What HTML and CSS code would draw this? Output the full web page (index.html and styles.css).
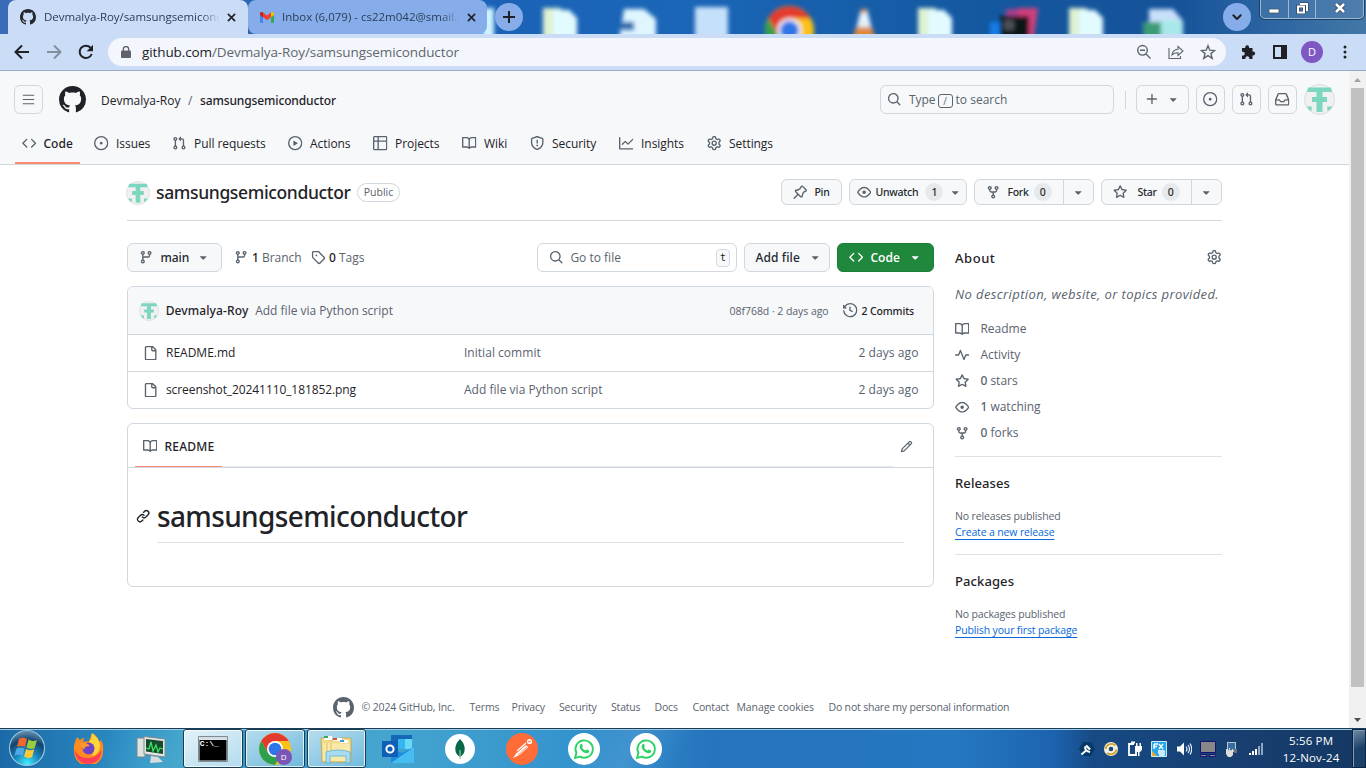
FILE: index.html
```html
<!DOCTYPE html>
<html lang="en">
<head>
<meta charset="utf-8">
<title>Devmalya-Roy/samsungsemiconductor</title>
<link rel="stylesheet" href="styles.css">
</head>
<body>
<svg class="defs" width="0" height="0" aria-hidden="true">
<symbol id="mark" viewBox="0 0 16 16"><path d="M8 0c4.42 0 8 3.58 8 8a8.013 8.013 0 0 1-5.45 7.59c-.4.08-.55-.17-.55-.38 0-.27.01-1.13.01-2.2 0-.75-.25-1.23-.54-1.48 1.78-.2 3.65-.88 3.65-3.95 0-.88-.31-1.59-.82-2.15.08-.2.36-1.02-.08-2.12 0 0-.67-.22-2.2.82-.64-.18-1.32-.27-2-.27-.68 0-1.36.09-2 .27-1.53-1.03-2.2-.82-2.2-.82-.44 1.1-.16 1.92-.08 2.12-.51.56-.82 1.28-.82 2.15 0 3.06 1.86 3.75 3.64 3.95-.23.2-.44.55-.51 1.07-.46.21-1.61.55-2.33-.66-.15-.24-.6-.83-1.23-.82-.67.01-.27.38.01.53.34.19.73.9.82 1.13.16.45.68 1.31 2.69.94 0 .67.01 1.3.01 1.49 0 .21-.15.45-.55.38A7.995 7.995 0 0 1 0 8c0-4.42 3.58-8 8-8Z"/></symbol>
<symbol id="code" viewBox="0 0 16 16"><path d="m11.28 3.22 4.25 4.25a.75.75 0 0 1 0 1.06l-4.25 4.25a.749.749 0 0 1-1.275-.326.749.749 0 0 1 .215-.734L13.94 8l-3.72-3.72a.749.749 0 0 1 .326-1.275.749.749 0 0 1 .734.215Zm-6.56 0a.751.751 0 0 1 1.042.018.751.751 0 0 1 .018 1.042L2.06 8l3.72 3.72a.749.749 0 0 1-.326 1.275.749.749 0 0 1-.734-.215L.47 8.53a.75.75 0 0 1 0-1.06Z"/></symbol>
<symbol id="issue" viewBox="0 0 16 16"><path d="M8 9.5a1.5 1.5 0 1 0 0-3 1.5 1.5 0 0 0 0 3Z"/><path d="M8 0a8 8 0 1 1 0 16A8 8 0 0 1 8 0ZM1.5 8a6.5 6.5 0 1 0 13 0 6.5 6.5 0 0 0-13 0Z"/></symbol>
<symbol id="pull" viewBox="0 0 16 16"><path d="M1.5 3.25a2.25 2.25 0 1 1 3 2.122v5.256a2.251 2.251 0 1 1-1.5 0V5.372A2.25 2.25 0 0 1 1.5 3.25Zm5.677-.177L9.573.677A.25.25 0 0 1 10 .854V2.5h1A2.5 2.5 0 0 1 13.5 5v5.628a2.251 2.251 0 1 1-1.5 0V5a1 1 0 0 0-1-1h-1v1.646a.25.25 0 0 1-.427.177L7.177 3.427a.25.25 0 0 1 0-.354ZM3.75 2.5a.75.75 0 1 0 0 1.5.75.75 0 0 0 0-1.5Zm0 9.5a.75.75 0 1 0 0 1.5.75.75 0 0 0 0-1.5Zm8.25.75a.75.75 0 1 0 1.5 0 .75.75 0 0 0-1.5 0Z"/></symbol>
<symbol id="play" viewBox="0 0 16 16"><path d="M8 0a8 8 0 1 1 0 16A8 8 0 0 1 8 0ZM1.5 8a6.5 6.5 0 1 0 13 0 6.5 6.5 0 0 0-13 0Zm4.879-2.773 4.264 2.559a.25.25 0 0 1 0 .428l-4.264 2.559A.25.25 0 0 1 6 10.559V5.442a.25.25 0 0 1 .379-.215Z"/></symbol>
<symbol id="table" viewBox="0 0 16 16"><path d="M0 1.75C0 .784.784 0 1.75 0h12.5C15.216 0 16 .784 16 1.75v12.5A1.75 1.75 0 0 1 14.25 16H1.75A1.75 1.75 0 0 1 0 14.25ZM6.5 6.5v8h7.75a.25.25 0 0 0 .25-.25V6.5Zm8-1.5V1.75a.25.25 0 0 0-.25-.25H6.5V5Zm-13 1.5v7.75c0 .138.112.25.25.25H5v-8ZM5 5V1.5H1.75a.25.25 0 0 0-.25.25V5Z"/></symbol>
<symbol id="book" viewBox="0 0 16 16"><path d="M0 1.75A.75.75 0 0 1 .75 1h4.253c1.227 0 2.317.59 3 1.501A3.743 3.743 0 0 1 11.006 1h4.245a.75.75 0 0 1 .75.75v10.5a.75.75 0 0 1-.75.75h-4.507a2.25 2.25 0 0 0-1.591.659l-.622.621a.75.75 0 0 1-1.06 0l-.622-.621A2.25 2.25 0 0 0 5.258 13H.75a.75.75 0 0 1-.75-.75Zm7.251 10.324.004-5.073-.002-2.253A2.25 2.25 0 0 0 5.003 2.5H1.5v9h3.757a3.75 3.75 0 0 1 1.994.574ZM8.755 4.75l-.004 7.322a3.752 3.752 0 0 1 1.992-.572H14.5v-9h-3.495a2.25 2.25 0 0 0-2.25 2.25Z"/></symbol>
<symbol id="shield" viewBox="0 0 16 16"><path d="M7.467.133a1.748 1.748 0 0 1 1.066 0l5.25 1.68A1.75 1.75 0 0 1 15 3.48V7c0 1.566-.32 3.182-1.303 4.682-.983 1.498-2.585 2.813-5.032 3.855a1.697 1.697 0 0 1-1.33 0c-2.447-1.042-4.049-2.357-5.032-3.855C1.32 10.182 1 8.566 1 7V3.48a1.75 1.75 0 0 1 1.217-1.667Zm.61 1.429a.25.25 0 0 0-.153 0l-5.25 1.68a.25.25 0 0 0-.174.238V7c0 1.358.275 2.666 1.057 3.86.784 1.194 2.121 2.34 4.366 3.297a.196.196 0 0 0 .154 0c2.245-.956 3.582-2.104 4.366-3.298C13.225 9.666 13.5 8.36 13.5 7V3.48a.251.251 0 0 0-.174-.237l-5.25-1.68ZM8.75 4.75v3a.75.75 0 0 1-1.5 0v-3a.75.75 0 0 1 1.5 0ZM9 10.5a1 1 0 1 1-2 0 1 1 0 0 1 2 0Z"/></symbol>
<symbol id="graph" viewBox="0 0 16 16"><path d="M1.5 1.75V13.5h13.75a.75.75 0 0 1 0 1.5H.75a.75.75 0 0 1-.75-.75V1.75a.75.75 0 0 1 1.5 0Zm14.28 2.53-5.25 5.25a.75.75 0 0 1-1.06 0L7 7.06 4.28 9.78a.751.751 0 0 1-1.042-.018.751.751 0 0 1-.018-1.042l3.25-3.25a.75.75 0 0 1 1.06 0L10 7.94l4.72-4.72a.751.751 0 0 1 1.042.018.751.751 0 0 1 .018 1.042Z"/></symbol>
<symbol id="gear" viewBox="0 0 16 16"><path d="M8 0a8.2 8.2 0 0 1 .701.031C9.444.095 9.99.645 10.16 1.29l.288 1.107c.018.066.079.158.212.224.231.114.454.243.668.386.123.082.233.09.299.071l1.103-.303c.644-.176 1.392.021 1.82.63.27.385.506.792.704 1.218.315.675.111 1.422-.364 1.891l-.814.806c-.049.048-.098.147-.088.294.016.257.016.515 0 .772-.01.147.038.246.088.294l.814.806c.475.469.679 1.216.364 1.891a7.977 7.977 0 0 1-.704 1.217c-.428.61-1.176.807-1.82.63l-1.102-.302c-.067-.019-.177-.011-.3.071a5.909 5.909 0 0 1-.668.386c-.133.066-.194.158-.211.224l-.29 1.106c-.168.646-.715 1.196-1.458 1.26a8.006 8.006 0 0 1-1.402 0c-.743-.064-1.289-.614-1.458-1.26l-.289-1.106c-.018-.066-.079-.158-.212-.224a5.738 5.738 0 0 1-.668-.386c-.123-.082-.233-.09-.299-.071l-1.103.303c-.644.176-1.392-.021-1.82-.63a8.12 8.12 0 0 1-.704-1.218c-.315-.675-.111-1.422.363-1.891l.815-.806c.05-.048.098-.147.088-.294a6.214 6.214 0 0 1 0-.772c.01-.147-.038-.246-.088-.294l-.815-.806C.635 6.045.431 5.298.746 4.623a7.92 7.92 0 0 1 .704-1.217c.428-.61 1.176-.807 1.82-.63l1.102.302c.067.019.177.011.3-.071.214-.143.437-.272.668-.386.133-.066.194-.158.211-.224l.29-1.106C6.009.645 6.556.095 7.299.03 7.53.01 7.764 0 8 0Zm-.571 1.525c-.036.003-.108.036-.137.146l-.289 1.105c-.147.561-.549.967-.998 1.189-.173.086-.34.183-.5.29-.417.278-.97.423-1.529.27l-1.103-.303c-.109-.03-.175.016-.195.045-.22.312-.412.644-.573.99-.014.031-.021.11.059.19l.815.806c.411.406.562.957.53 1.456a4.709 4.709 0 0 0 0 .582c.032.499-.119 1.05-.53 1.456l-.815.806c-.081.08-.073.159-.059.19.162.346.353.677.573.989.02.03.085.076.195.046l1.102-.303c.56-.153 1.113-.008 1.53.27.161.107.328.204.501.29.447.222.85.629.997 1.189l.289 1.105c.029.109.101.143.137.146a6.6 6.6 0 0 0 1.142 0c.036-.003.108-.036.137-.146l.289-1.105c.147-.561.549-.967.998-1.189.173-.086.34-.183.5-.29.417-.278.97-.423 1.529-.27l1.103.303c.109.029.175-.016.195-.045.22-.313.411-.644.573-.99.014-.031.021-.11-.059-.19l-.815-.806c-.411-.406-.562-.957-.53-1.456a4.709 4.709 0 0 0 0-.582c-.032-.499.119-1.05.53-1.456l.815-.806c.081-.08.073-.159.059-.19a6.464 6.464 0 0 0-.573-.989c-.02-.03-.085-.076-.195-.046l-1.102.303c-.56.153-1.113.008-1.53-.27a4.44 4.44 0 0 0-.501-.29c-.447-.222-.85-.629-.997-1.189l-.289-1.105c-.029-.11-.101-.143-.137-.146a6.6 6.6 0 0 0-1.142 0ZM11 8a3 3 0 1 1-6 0 3 3 0 0 1 6 0ZM9.5 8a1.5 1.5 0 1 0-3.001.001A1.5 1.5 0 0 0 9.5 8Z"/></symbol>
<symbol id="search" viewBox="0 0 16 16"><path d="M10.68 11.74a6 6 0 0 1-7.922-8.982 6 6 0 0 1 8.982 7.922l3.04 3.04a.749.749 0 0 1-.326 1.275.749.749 0 0 1-.734-.215ZM11.5 7a4.499 4.499 0 1 0-8.997 0A4.499 4.499 0 0 0 11.5 7Z"/></symbol>
<symbol id="branch" viewBox="0 0 16 16"><path d="M9.5 3.25a2.25 2.25 0 1 1 3 2.122V6A2.5 2.5 0 0 1 10 8.5H6a1 1 0 0 0-1 1v1.128a2.251 2.251 0 1 1-1.5 0V5.372a2.25 2.25 0 1 1 1.5 0v1.836A2.493 2.493 0 0 1 6 7h4a1 1 0 0 0 1-1v-.628A2.25 2.25 0 0 1 9.5 3.25Zm-6 0a.75.75 0 1 0 1.5 0 .75.75 0 0 0-1.5 0Zm8.25-.75a.75.75 0 1 0 0 1.5.75.75 0 0 0 0-1.5ZM4.25 12a.75.75 0 1 0 0 1.5.75.75 0 0 0 0-1.5Z"/></symbol>
<symbol id="fork" viewBox="0 0 16 16"><path d="M5 5.372v.878c0 .414.336.75.75.75h4.5a.75.75 0 0 0 .75-.75v-.878a2.25 2.25 0 1 1 1.5 0v.878a2.25 2.25 0 0 1-2.25 2.25h-1.5v2.128a2.251 2.251 0 1 1-1.5 0V8.5h-1.5A2.25 2.25 0 0 1 3.5 6.25v-.878a2.25 2.25 0 1 1 1.5 0ZM5 3.25a.75.75 0 1 0-1.5 0 .75.75 0 0 0 1.5 0Zm6.75.75a.75.75 0 1 0 0-1.5.75.75 0 0 0 0 1.5Zm-3 8.75a.75.75 0 1 0-1.5 0 .75.75 0 0 0 1.5 0Z"/></symbol>
<symbol id="star" viewBox="0 0 16 16"><path d="M8 .25a.75.75 0 0 1 .673.418l1.882 3.815 4.21.612a.75.75 0 0 1 .416 1.279l-3.046 2.97.719 4.192a.751.751 0 0 1-1.088.791L8 12.347l-3.766 1.98a.75.75 0 0 1-1.088-.79l.72-4.194L.818 6.374a.75.75 0 0 1 .416-1.28l4.21-.611L7.327.668A.75.75 0 0 1 8 .25Zm0 2.445L6.615 5.5a.75.75 0 0 1-.564.41l-3.097.45 2.24 2.184a.75.75 0 0 1 .216.664l-.528 3.084 2.769-1.456a.75.75 0 0 1 .698 0l2.77 1.456-.53-3.084a.75.75 0 0 1 .216-.664l2.24-2.183-3.096-.45a.75.75 0 0 1-.564-.41L8 2.694Z"/></symbol>
<symbol id="eye" viewBox="0 0 16 16"><path d="M8 2c1.981 0 3.671.992 4.933 2.078 1.27 1.091 2.187 2.345 2.637 3.023a1.62 1.62 0 0 1 0 1.798c-.45.678-1.367 1.932-2.637 3.023C11.67 13.008 9.981 14 8 14c-1.981 0-3.671-.992-4.933-2.078C1.797 10.83.88 9.576.43 8.898a1.62 1.62 0 0 1 0-1.798c.45-.677 1.367-1.931 2.637-3.022C4.33 2.992 6.019 2 8 2ZM1.679 7.932a.12.12 0 0 0 0 .136c.411.622 1.241 1.75 2.366 2.717C5.176 11.758 6.527 12.5 8 12.5c1.473 0 2.825-.742 3.955-1.715 1.124-.967 1.954-2.096 2.366-2.717a.12.12 0 0 0 0-.136c-.412-.621-1.242-1.75-2.366-2.717C10.824 4.242 9.473 3.5 8 3.5c-1.473 0-2.825.742-3.955 1.715-1.124.967-1.954 2.096-2.366 2.717ZM8 10a2 2 0 1 1-.001-3.999A2 2 0 0 1 8 10Z"/></symbol>
<symbol id="history" viewBox="0 0 16 16"><path d="m.427 1.927 1.215 1.215a8.002 8.002 0 1 1-1.6 5.685.75.75 0 1 1 1.493-.154 6.5 6.5 0 1 0 1.18-4.458l1.358 1.358A.25.25 0 0 1 3.896 6H.25A.25.25 0 0 1 0 5.75V2.104a.25.25 0 0 1 .427-.177ZM7.75 4a.75.75 0 0 1 .75.75v2.992l2.028.812a.75.75 0 0 1-.557 1.392l-2.5-1A.751.751 0 0 1 7 8.25v-3.5A.75.75 0 0 1 7.75 4Z"/></symbol>
<symbol id="file" viewBox="0 0 16 16"><path d="M2 1.75C2 .784 2.784 0 3.75 0h6.586c.464 0 .909.184 1.237.513l2.914 2.914c.329.328.513.773.513 1.237v9.586A1.75 1.75 0 0 1 13.25 16h-9.5A1.75 1.75 0 0 1 2 14.25Zm1.75-.25a.25.25 0 0 0-.25.25v12.5c0 .138.112.25.25.25h9.5a.25.25 0 0 0 .25-.25V6h-2.75A1.75 1.75 0 0 1 9 4.25V1.5Zm6.75.062V4.25c0 .138.112.25.25.25h2.688l-.011-.013-2.914-2.914-.013-.011Z"/></symbol>
<symbol id="tag" viewBox="0 0 16 16"><path d="M1 7.775V2.75C1 1.784 1.784 1 2.75 1h5.025c.464 0 .91.184 1.238.513l6.25 6.25a1.75 1.75 0 0 1 0 2.474l-5.026 5.026a1.75 1.75 0 0 1-2.474 0l-6.25-6.25A1.752 1.752 0 0 1 1 7.775Zm1.5 0c0 .066.026.13.073.177l6.25 6.25a.25.25 0 0 0 .354 0l5.025-5.025a.25.25 0 0 0 0-.354l-6.25-6.25a.25.25 0 0 0-.177-.073H2.75a.25.25 0 0 0-.25.25ZM6 5a1 1 0 1 1 0 2 1 1 0 0 1 0-2Z"/></symbol>
<symbol id="pencil" viewBox="0 0 16 16"><path d="M11.013 1.427a1.75 1.75 0 0 1 2.474 0l1.086 1.086a1.75 1.75 0 0 1 0 2.474l-8.61 8.61c-.21.21-.47.364-.756.445l-3.251.93a.75.75 0 0 1-.927-.928l.929-3.25c.081-.286.235-.547.445-.758l8.61-8.61Zm.176 4.823L9.75 4.81l-6.286 6.287a.253.253 0 0 0-.064.108l-.558 1.953 1.953-.558a.253.253 0 0 0 .108-.064Zm1.238-3.763a.25.25 0 0 0-.354 0L10.811 3.75l1.439 1.44 1.263-1.263a.25.25 0 0 0 0-.354Z"/></symbol>
<symbol id="link" viewBox="0 0 16 16"><path d="m7.775 3.275 1.25-1.25a3.5 3.5 0 1 1 4.95 4.95l-2.5 2.5a3.5 3.5 0 0 1-4.95 0 .751.751 0 0 1 .018-1.042.751.751 0 0 1 1.042-.018 1.998 1.998 0 0 0 2.83 0l2.5-2.5a2.002 2.002 0 0 0-2.83-2.83l-1.25 1.25a.751.751 0 0 1-1.042-.018.751.751 0 0 1-.018-1.042Zm-4.69 9.64a1.998 1.998 0 0 0 2.83 0l1.25-1.25a.751.751 0 0 1 1.042.018.751.751 0 0 1 .018 1.042l-1.25 1.25a3.5 3.5 0 1 1-4.95-4.95l2.5-2.5a3.5 3.5 0 0 1 4.95 0 .751.751 0 0 1-.018 1.042.751.751 0 0 1-1.042.018 1.998 1.998 0 0 0-2.83 0l-2.5 2.5a1.998 1.998 0 0 0 0 2.83Z"/></symbol>
<symbol id="pulse" viewBox="0 0 16 16"><path d="M6 2c.306 0 .582.187.696.471L10 10.731l1.304-3.26A.751.751 0 0 1 12 7h3.25a.75.75 0 0 1 0 1.5h-2.742l-1.812 4.528a.751.751 0 0 1-1.392 0L6 4.77 4.696 8.03A.75.75 0 0 1 4 8.5H.75a.75.75 0 0 1 0-1.5h2.742l1.812-4.529A.751.751 0 0 1 6 2Z"/></symbol>
<symbol id="inbox" viewBox="0 0 16 16"><path d="M2.8 2.06A1.75 1.75 0 0 1 4.41 1h7.18c.7 0 1.333.417 1.61 1.06l2.74 6.395c.04.093.06.194.06.295v4.5A1.75 1.75 0 0 1 14.25 15H1.75A1.75 1.75 0 0 1 0 13.25v-4.5c0-.101.02-.202.06-.295Zm1.61.44a.25.25 0 0 0-.23.152L1.887 8H4.75a.75.75 0 0 1 .6.3L6.625 10h2.75l1.275-1.7a.75.75 0 0 1 .6-.3h2.863L11.82 2.652a.25.25 0 0 0-.23-.152Zm10.09 7h-2.875l-1.275 1.7a.75.75 0 0 1-.6.3h-3.5a.75.75 0 0 1-.6-.3L4.375 9.5H1.5v3.75c0 .138.112.25.25.25h12.5a.25.25 0 0 0 .25-.25Z"/></symbol>
<symbol id="pin" viewBox="0 0 16 16"><path d="m11.294.984 3.722 3.722a1.75 1.75 0 0 1-.504 2.826l-1.327.613a3.089 3.089 0 0 0-1.707 2.084l-.584 2.454c-.317 1.332-1.972 1.8-2.94.832L5.75 11.311 1.78 15.28a.749.749 0 1 1-1.06-1.06l3.969-3.97-2.204-2.204c-.968-.968-.5-2.623.832-2.94l2.454-.584a3.08 3.08 0 0 0 2.084-1.707l.613-1.327a1.75 1.75 0 0 1 2.826-.504ZM6.283 9.723l2.732 2.731a.25.25 0 0 0 .42-.119l.584-2.454a4.586 4.586 0 0 1 2.537-3.098l1.328-.613a.25.25 0 0 0 .072-.404l-3.722-3.722a.25.25 0 0 0-.404.072l-.613 1.328a4.584 4.584 0 0 1-3.098 2.537l-2.454.584a.25.25 0 0 0-.119.42l2.731 2.732Z"/></symbol>
<symbol id="plus" viewBox="0 0 16 16"><path d="M7.75 2a.75.75 0 0 1 .75.75V7h4.25a.75.75 0 0 1 0 1.5H8.5v4.25a.75.75 0 0 1-1.5 0V8.5H2.75a.75.75 0 0 1 0-1.5H7V2.75A.75.75 0 0 1 7.75 2Z"/></symbol>
<symbol id="caret" viewBox="0 0 16 16"><path d="m4.427 7.427 3.396 3.396a.25.25 0 0 0 .354 0l3.396-3.396A.25.25 0 0 0 11.396 7H4.604a.25.25 0 0 0-.177.427Z"/></symbol>
<symbol id="bars" viewBox="0 0 16 16"><path d="M1 2.1h14v1.4H1zM1 7.3h14v1.4H1zM1 12.5h14v1.4H1z"/></symbol>
<symbol id="ident" viewBox="0 0 31 31"><circle cx="15.5" cy="15.5" r="15" fill="#f0f0f0" stroke="#d9dcdf"/><path fill="#7cd6c0" d="M4 3.5h23l1 4.5h-9.500v5h4.500v5h-4.500v10h-6V18H8v-5h4.500V8H3zM2.800 22.500H7.700V27L5 25.500zM28.200 22.500H23.300V27L26 25.500z"/></symbol>
<symbol id="chrome" viewBox="0 0 32 32"><circle cx="16" cy="16" r="16" fill="#fbc116"/><path fill="#e33b2e" d="M2.200 8A16 16 0 0 1 29.800 8H16l-7 12z"/><path fill="#2da04e" d="M2.200 8A16 16 0 0 0 16 32l7-12H9z"/><circle cx="16" cy="16" r="8" fill="#fff"/><circle cx="16" cy="16" r="6.300" fill="#2f75e8"/></symbol>
<symbol id="whatsapp" viewBox="0 0 32 32"><circle cx="16" cy="16" r="16" fill="#fff"/><path d="M7 25l1.400-5A8.700 8.700 0 1 1 12 23.700z" fill="none" stroke="#2bd366" stroke-width="1.900"/><path d="M12.600 11.200c.8-.8 1.300-.5 1.600.4l.6 1.400c.2.600-.7 1-.7 1.500.8 1.600 1.900 2.500 3.500 3.100.5 0 .9-1.200 1.500-1l1.800.9c.8.400-.1 2.400-1.500 2.700-3.500.7-8.200-3.900-7.700-7.200.1-.7.400-1.300.9-1.800z" fill="#2bd366"/></symbol>
<symbol id="folderdoc" viewBox="0 0 36 32"><path d="M0 0h18v32H0z" fill="#dff2d0"/><path d="M10 2h16l8 8v22H10z" fill="#e2fbff"/></symbol>
</svg>

<header class="tabstrip">
  <svg class="desktop" width="1366" height="34" viewBox="0 0 1366 34" aria-hidden="true">
    <defs>
      <linearGradient id="sky" x1="0" x2="1"><stop offset="0" stop-color="#396bb6"/><stop offset=".35" stop-color="#1b62b6"/><stop offset=".5" stop-color="#1b66b8"/><stop offset=".72" stop-color="#14589f"/><stop offset=".86" stop-color="#15529a"/><stop offset="1" stop-color="#4377a7"/></linearGradient>
      <filter id="soft" x="-20%" y="-20%" width="140%" height="140%"><feGaussianBlur stdDeviation="2"/></filter>
    </defs>
    <path fill="url(#sky)" d="M0 0h1366v34H0z"/>
    <g filter="url(#soft)">
      <path fill="#cdf3ff" d="M482 8h12v42h-12z"/>
      <use href="#folderdoc" x="543" y="8" width="36" height="32"/>
      <path fill="#dff6ff" d="M624 9h20l12 10v30h-36V30h14v-8h-12z"/><path fill="#2e68a8" d="M620 23h14v5h-14z"/>
      <path fill="#c5e0fa" d="M695 7h33v43h-33z"/><use href="#chrome" x="765" y="6" width="49" height="49"/>
      <path fill="#e6f2fa" d="M861 9h6l10 41h-26z"/><path fill="#e0893e" d="M861 9h5l1 4h-7zM856 27h16l6 22h-28z"/>
      <use href="#folderdoc" x="918" y="8" width="36" height="32"/>
      <path fill="#197de8" d="M990 22h18v28h-18z"/><path fill="#a8408c" d="M1006 9h14v41h-14z"/><path fill="#d0407c" d="M1018 8h20l-6 42h-14z"/><path fill="#101218" d="M1000 16h29v34h-29z"/><path fill="#4b5058" d="M1004 20h10v10h-10z"/>
      <use href="#folderdoc" x="1069" y="8" width="36" height="32"/>
      <path fill="#c9dffa" d="M1149 9h24l10 12v29h-34z"/><path fill="#a9e8ea" d="M1160 20h22v30h-22z"/><path fill="#3b9c77" d="M1143 22h18v28h-18z"/>
    </g>
  </svg>
  <div class="tab tab-active">
    <svg class="ico-tab"><use href="#mark"/></svg><span class="tab-title">Devmalya-Roy/samsungsemiconductor</span>
    <svg class="close" viewBox="0 0 10 10"><path d="M1 1l8 8M9 1l-8 8"/></svg>
  </div>
  <div class="tab tab-idle">
    <svg class="ico-tab" viewBox="0 0 16 16"><path fill="#4285f4" d="M1 4h3v10H2a1 1 0 0 1-1-1z"/><path fill="#34a853" d="M12 6l3-2v9a1 1 0 0 1-1 1h-2z"/><path fill="#fbbc04" d="M12 3.500 13.500 3q1.500 0 1.500 1.500V6l-3 2.300z"/><path fill="#ea4335" d="M1 4.500C1 3 3 2.500 4 3.500l4 3 4-3v4.800l-4 3-4-3z"/><path fill="#c5221f" d="M1 4.500C1 3 3 2.500 4 3.500v4.800L1 6z"/></svg><span class="tab-title">Inbox (6,079) - cs22m042@smail.iitm</span>
    <svg class="close" viewBox="0 0 10 10"><path d="M1 1l8 8M9 1l-8 8"/></svg>
  </div>
  <div class="round new-tab"><svg viewBox="0 0 12 12" width="12" height="12"><path d="M6 0v12M0 6h12"/></svg></div>
  <div class="round tab-menu"><svg viewBox="0 0 10 6" width="10" height="6"><path d="M.8.800 5 5 9.200.8"/></svg></div>
  <div class="winctl">
    <span class="wc"><svg width="12" height="18"><path fill="#fff" stroke="#44566b" stroke-width=".8" d="M1 9h10v4H1z"/></svg></span>
    <span class="wc"><svg width="14" height="18"><path fill="none" stroke="#3a4b60" stroke-width="3.600" d="M5 4h7v7M3 6.500h6v6H3z"/><path fill="none" stroke="#fff" stroke-width="2" d="M5 4h7v7M3 6.500h6v6H3z"/></svg></span>
    <span class="wc wide"><svg width="14" height="18"><path stroke="#3a4b60" stroke-width="4.500" d="M3 4l8 8M11 4l-8 8"/><path stroke="#fff" stroke-width="2.600" d="M3 4l8 8M11 4l-8 8"/></svg></span>
  </div>
</header>

<div class="toolbar">
  <svg class="nav-ico" viewBox="0 0 16 16"><path d="M15 8H2M8 1.500 1.500 8 8 14.500"/></svg>
  <svg class="nav-ico dim" viewBox="0 0 16 16"><path d="M1 8h13M8 1.500 14.500 8 8 14.500"/></svg>
  <svg class="nav-ico" viewBox="0 0 16 16"><path d="M13.700 10A6.200 6.200 0 1 1 12.500 3.700L14 5.300"/><path class="solid" d="M15 .8v6.400H8.700z"/></svg>
  <div class="omnibox">
    <svg class="lock" width="10" height="12" viewBox="0 0 10 12"><path fill="#5f6368" d="M1 4.500h8q1 0 1 1V11q0 1-1 1H1q-1 0-1-1V5.500q0-1 1-1z"/><path fill="none" stroke="#5f6368" stroke-width="1.300" d="M2.300 5V3.300a2.700 2.700 0 0 1 5.400 0V5"/></svg>
    <span class="url"><b>github.com</b>/Devmalya-Roy/samsungsemiconductor</span>
    <svg class="ob-ico" viewBox="0 0 16 16"><circle cx="6.500" cy="6.300" r="4.800"/><path d="M10 10l4.500 4.500M4 6.300h5"/></svg>
    <svg class="ob-ico thin" viewBox="0 0 16 16"><path d="M1 4v10.500h11.500v-2.500"/><path d="M4 11c.5-4 2.500-5.500 6-5.700V2.500L15 7l-5 4.500V8.700C7.500 8.600 5.500 9.300 4 11z"/></svg>
    <svg class="ob-ico" viewBox="0 0 16 16"><path d="M8 1.700l1.800 4.500 4.900.3-3.800 3.100 1.300 4.700L8 11.600l-4.200 2.700 1.300-4.700L1.300 6.500l4.900-.3z"/></svg>
  </div>
  <svg class="tb-ico" viewBox="0 0 16 16"><path d="M2 4h3.300a2 2 0 1 1 3.700 0h3.500v3.500a2 2 0 1 1 0 3.800V15H9.200a2 2 0 1 0-3.700 0H2v-3.500a2 2 0 1 0 0-3.700z"/></svg>
  <svg class="tb-ico" viewBox="0 0 16 16"><path d="M1 1h14v14H1zM3 3v10h6V3z" fill-rule="evenodd"/></svg>
  <span class="profile">D</span>
  <svg class="tb-ico" viewBox="0 0 16 16"><circle cx="8" cy="3" r="1.500"/><circle cx="8" cy="8" r="1.500"/><circle cx="8" cy="13" r="1.500"/></svg>
</div>

<div class="viewport">
 <div class="page">
  <div class="gh-header">
    <div class="gh-top">
      <span class="sq"><svg class="i13"><use href="#bars"/></svg></span>
      <svg class="logo"><use href="#mark"/></svg>
      <span class="owner">Devmalya-Roy</span><span class="slash">/</span><span class="med crumb">samsungsemiconductor</span>
      <div class="gsearch"><svg class="i14"><use href="#search"/></svg><span>Type</span><span class="key">/</span><span>to search</span></div>
      <i class="vr"></i>
      <span class="sq plus"><svg class="i14"><use href="#plus"/></svg><svg class="i14"><use href="#caret"/></svg></span>
      <span class="sq"><svg class="i14"><use href="#issue"/></svg></span>
      <span class="sq"><svg class="i14"><use href="#pull"/></svg></span>
      <span class="sq"><svg class="i14"><use href="#inbox"/></svg></span>
      <svg class="avatar-lg"><use href="#ident"/></svg>
    </div>
    <nav class="gh-nav">
      <a class="n-code on"><svg class="i14"><use href="#code"/></svg><span class="med">Code</span></a>
      <a class="n-issues"><svg class="i14"><use href="#issue"/></svg><span>Issues</span></a>
      <a class="n-pulls"><svg class="i14"><use href="#pull"/></svg><span>Pull requests</span></a>
      <a class="n-actions"><svg class="i14"><use href="#play"/></svg><span>Actions</span></a>
      <a class="n-projects"><svg class="i14"><use href="#table"/></svg><span>Projects</span></a>
      <a class="n-wiki"><svg class="i14"><use href="#book"/></svg><span>Wiki</span></a>
      <a class="n-security"><svg class="i14"><use href="#shield"/></svg><span>Security</span></a>
      <a class="n-insights"><svg class="i14"><use href="#graph"/></svg><span>Insights</span></a>
      <a><svg class="i14"><use href="#gear"/></svg><span>Settings</span></a>
    </nav>
  </div>

  <div class="repo-head">
    <svg class="avatar-md"><use href="#ident"/></svg>
    <span class="repo-name">samsungsemiconductor</span><span class="public">Public</span>
    <div class="actions">
      <span class="btn pin"><svg class="i14"><use href="#pin"/></svg><span>Pin</span></span>
      <span class="btn watch"><svg class="i14"><use href="#eye"/></svg><span>Unwatch</span><em>1</em><svg class="i14"><use href="#caret"/></svg></span>
      <span class="btn split fork"><span class="main-part"><svg class="i14"><use href="#fork"/></svg><span>Fork</span><em>0</em></span><span class="drop"><svg class="i14"><use href="#caret"/></svg></span></span>
      <span class="btn split starb"><span class="main-part"><svg class="i14"><use href="#star"/></svg><span>Star</span><em>0</em></span><span class="drop"><svg class="i14"><use href="#caret"/></svg></span></span>
    </div>
  </div>

  <div class="layout">
    <main>
      <div class="filebar">
        <span class="fbtn b-main"><svg class="i14"><use href="#branch"/></svg><span class="med">main</span><svg class="i14"><use href="#caret"/></svg></span>
        <span class="stat s-branch"><svg class="i14"><use href="#branch"/></svg><span><b>1</b> Branch</span></span>
        <span class="stat s-tag"><svg class="i14"><use href="#tag"/></svg><span><b>0</b> Tags</span></span>
        <span class="goto"><svg class="i14"><use href="#search"/></svg><span class="ph">Go to file</span><kbd>t</kbd></span>
        <span class="fbtn b-add"><span class="med">Add file</span><svg class="i14"><use href="#caret"/></svg></span>
        <span class="fbtn b-code"><svg class="i14"><use href="#code"/></svg><span>Code</span><svg class="i14"><use href="#caret"/></svg></span>
      </div>
      <section class="files">
        <div class="latest"><svg class="avatar-sm"><use href="#ident"/></svg><span class="med who">Devmalya-Roy</span><span class="mut">Add file via Python script</span><span class="sha">08f768d · 2 days ago</span><svg class="i14 mutc"><use href="#history"/></svg><span class="commits">2 Commits</span></div>
        <div class="row"><svg class="i14"><use href="#file"/></svg><span class="fname">README.md</span><span class="msg">Initial commit</span><span class="age">2 days ago</span></div>
        <div class="row"><svg class="i14"><use href="#file"/></svg><span class="fname long">screenshot_20241110_181852.png</span><span class="msg">Add file via Python script</span><span class="age">2 days ago</span></div>
      </section>
      <section class="readme">
        <div class="rm-head"><div class="rm-tabs"><span class="rm-tab"><svg class="i14"><use href="#book"/></svg><span class="med">README</span></span></div><svg class="i13 pen"><use href="#pencil"/></svg></div>
        <div class="rm-body"><svg class="i14 anchor"><use href="#link"/></svg><h1>samsungsemiconductor</h1></div>
      </section>
    </main>
    <aside>
      <div class="about"><h2>About</h2><svg class="i14"><use href="#gear"/></svg></div>
      <p class="desc">No description, website, or topics provided.</p>
      <ul>
        <li><svg class="i14"><use href="#book"/></svg>Readme</li>
        <li><svg class="i14"><use href="#pulse"/></svg>Activity</li>
        <li><svg class="i14"><use href="#star"/></svg><span><b>0</b> stars</span></li>
        <li><svg class="i14"><use href="#eye"/></svg><span><b>1</b> watching</span></li>
        <li><svg class="i14"><use href="#fork"/></svg><span><b>0</b> forks</span></li>
      </ul>
      <section class="side"><h2>Releases</h2><p>No releases published</p><a>Create a new release</a></section>
      <section class="side"><h2>Packages</h2><p>No packages published</p><a>Publish your first package</a></section>
    </aside>
  </div>

  <footer><svg class="flogo"><use href="#mark"/></svg><span class="f-copy">© 2024 GitHub, Inc.</span><span class="f-terms">Terms</span><span class="f-priv">Privacy</span><span class="f-sec">Security</span><span class="f-stat">Status</span><span class="f-docs">Docs</span><span class="f-cont">Contact</span><span class="f-cook">Manage cookies</span><span>Do not share my personal information</span></footer>
 </div>
 <div class="scrollbar"><svg width="17" height="17"><path fill="#a3a3a3" d="M5 11l3.500-4 3.500 4z"/></svg><i class="thumb"></i><svg class="down" width="17" height="17"><path fill="#505050" d="M5 7h7l-3.500 4z"/></svg></div>
</div>

<div class="taskbar">
  <span class="start"><svg width="40" height="38" viewBox="0 0 40 38"><defs><radialGradient id="orb" cx=".5" cy=".95" r=".9"><stop offset="0" stop-color="#3ff0ff"/><stop offset=".4" stop-color="#1b86bd"/><stop offset=".75" stop-color="#12446f"/><stop offset="1" stop-color="#5d89a8"/></radialGradient></defs><circle cx="20" cy="19" r="17.500" fill="url(#orb)" stroke="#94c5df" stroke-width="1.200"/><path fill="#f1672c" d="M12 10q4-2.500 8 0l-2 8q-4-2-8 0z"/><path fill="#9bcc3c" d="M21.500 10.500q4 2.500 8.500.5l-2.300 8q-4 2-8.200-.5z"/><path fill="#4ba9e8" d="M9.500 19.500q4-2 8 0l-2 7.500q-4-2.300-8 0z"/><path fill="#fdc93a" d="M19 20q4 2.300 8.300.3l-2.200 7.700q-4 2-8-.5z"/></svg></span>
  <span class="slot"><svg width="31" height="31" viewBox="0 0 31 31"><path fill="#ff8a1e" d="M2 9l2-5 3 3q2-2 4-2l-1 4 6-1 3-8q7 4 7 9l2-2q3 5 2 11a14.500 14.500 0 0 1-29 1Q.5 13 2 9z"/><path fill="#ff3f55" d="M1.500 17q5 9 14 8 9-1 13-8Q28 30 15.500 31 3 30.500 1.500 17z"/><path fill="#ffd43a" d="M19 0q8 6 8 13-1 9-8 10 4-7-3-14 3-4 3-9z"/><circle cx="15.500" cy="15.500" r="6" fill="#6f43c8"/><path fill="#ff9530" d="M6 10q7-2 11 3-6 0-6 4z"/></svg></span>
  <span class="slot"><svg width="32" height="30" viewBox="0 0 32 30"><path fill="#dfe3df" stroke="#7b8583" d="M2 4h8v19H2z"/><path fill="#e6e8e8" stroke="#848a8b" d="M9 2.500 30 5v18L9 20z"/><path fill="#174b2e" d="M11 5l17 2v13l-17-2.500z"/><path fill="none" stroke="#3de063" stroke-width="1.300" d="M11 14l3 1 2-7 2 9 3-6 2 7 2-4 3 1"/><path fill="#d8dcdc" d="M16 22l7 1 5 5-13 1z"/></svg></span>
  <span class="slot win"><svg width="30" height="26" viewBox="0 0 30 26"><path fill="#dfe6ea" stroke="#7e8b92" d="M.5.500h29v25H.5z"/><path fill="#000" d="M1.500 4h27v20.500h-27z"/><path fill="#d5dde2" d="M2 1h26v2H2z"/></svg><code>C:\_</code></span>
  <span class="slot win"><svg width="32" height="32"><use href="#chrome"/></svg><i class="badge">D</i></span>
  <span class="slot win"><svg width="33" height="30" viewBox="0 0 33 30"><path fill="#f3dc87" stroke="#bb9a45" stroke-width=".7" d="M1 4h7l1 2h10l1-2h11v24H2z"/><path fill="#fff" d="M4 2h8v4H4zM13 4h9v3h-9zM20 6h8v3h-8z"/><path fill="#35a853" d="M4 2h4v2H4z"/><path fill="#d8502e" d="M13 4h4v2h-4z"/><path fill="#2f9bd8" d="M20 6h4v2h-4z"/><path fill="#f8e9a8" d="M3 9l27 1v17H3z"/><path fill="none" stroke="#dcc06c" d="M7 9v9M11 9v8"/><path fill="#a9dcf2" stroke="#5baed2" stroke-width=".8" d="M6 18q13-4 24 0v11h-4v-7H10v7H6z"/></svg></span>
  <span class="slot"><svg width="32" height="30" viewBox="0 0 32 30"><path fill="#1567b8" d="M9 1h21v14H9z"/><path fill="#35b6f0" d="M16 5h7v10h-7z"/><path fill="#67d9fb" d="M23 5h7v10h-7z"/><path fill="#1c8edb" d="M9 14l11 5 12-6v16H9z"/><path fill="#46bdf2" d="M9 29l23-16v16z"/><path fill="#0f5fb6" d="M0 7h16v16H0z"/><circle cx="8" cy="15" r="3.600" fill="none" stroke="#fff" stroke-width="2"/></svg></span>
  <span class="slot"><svg width="30" height="30" viewBox="0 0 30 30"><circle cx="15" cy="15" r="15" fill="#fff"/><path fill="#08684a" d="M15 5q5 5 4.700 10.500Q19.500 20 15 23q-4.500-3-4.700-7.500Q10 10 15 5z"/><path fill="#9bc5b0" d="M14.500 16h1.200v9h-1.200z"/></svg></span>
  <span class="slot"><svg width="32" height="32" viewBox="0 0 32 32"><circle cx="16" cy="16" r="16" fill="#ff6c37"/><path d="M7 25l3.500-5 9-8 3 2-9 8z" fill="#fff"/><path d="M12 22l9-8M11 19.500l9-8" stroke="#ff6c37" stroke-width=".8"/><path d="M11 18l9-8" stroke="#fff" stroke-width="1.100"/><circle cx="23.500" cy="8.500" r="2.600" fill="#fff"/><path d="M22 9l3-1" stroke="#ff6c37"/></svg></span>
  <span class="slot"><svg width="32" height="32"><use href="#whatsapp"/></svg></span>
  <span class="slot"><svg width="32" height="32"><use href="#whatsapp"/></svg></span>
  <div class="tray">
    <svg viewBox="0 0 16 16"><path fill="#073968" d="M4 1h8l4 7-4 7H4L0 8z"/><path fill="none" stroke="#fff" stroke-width="2" d="M2.500 13.500 7 9.500M6 5.500q0 5 5 5.500"/><path fill="none" stroke="#fff" stroke-width="2.400" d="M7 4.500l4 4"/></svg>
    <svg viewBox="0 0 16 16"><circle cx="8" cy="8" r="7" fill="#f2efe6"/><path fill="none" stroke="#d5a42a" stroke-width="1.800" d="M2.500 8a6 6 0 0 1 10-3.500M13.500 8.500a6 6 0 0 1-9.500 3.500"/><circle cx="8" cy="8" r="2.300" fill="#254769"/></svg>
    <svg viewBox="0 0 16 16"><path fill="none" stroke="#fff" stroke-width="1.800" d="M7 3H2v11h7V9M4 1.500h4"/><path fill="#fff" d="M8 5h7v4l-2 2h-3L8 9zM9 2h1.500v3H9zM12.500 2H14v3h-1.500zM11 10h1.500v5H11z"/></svg>
    <svg viewBox="0 0 16 16"><path fill="#2aa6e8" stroke="#c5ecff" d="M.5.500h15v15H.5z"/><path stroke="#fff" stroke-width="1.400" fill="none" d="M3 3h4M3 3v5M3 5.500h3M8 3l4 5M12 3 8 8M7 10h6v4H8M7 12h5"/><path fill="#f2a62e" d="M1 10l5 5H1z"/></svg>
    <svg viewBox="0 0 16 16"><path fill="#fff" d="M1 5.500h3L8 1.500v13l-4-4H1z"/><path fill="none" stroke="#e4effa" stroke-width="1.200" d="M10 5.500q2 2.500 0 5M12 4q3 4 0 8M14 2.500q3.500 5.500 0 11"/></svg>
    <svg viewBox="0 0 16 16"><path fill="#888" stroke="#151574" d="M.5.500h15v11H.5z"/><path fill="#888" stroke="#151574" d="M.5 13.500h6v2h-6zM9.500 13.500h6v2h-6z"/></svg>
    <svg viewBox="0 0 16 16"><path fill="#b8c7d5" d="M3 1h9v10H3z"/><path fill="#386da0" d="M4 2h7v7H4z"/><path fill="#ddd" d="M2 8h2v2h1V7h1v3h2V8h1v6l-2 2H4l-2-3z"/><path fill="#66717d" d="M10 8h3v4h-3z"/></svg>
    <svg viewBox="0 0 16 16"><path fill="#fff" d="M1 12h2v2H1zM4 10h2v4H4zM7 8h2v6H7z"/><path fill="#8fa8c2" d="M10 5h2v9h-2zM13 2h2v12h-2z"/></svg>
  </div>
  <div class="clock"><span>5:56 PM</span><span>12-Nov-24</span></div>
  <i class="peek"></i>
</div>
</body>
</html>
```
FILE: styles.css
```css
*{box-sizing:border-box}
body{margin:0;width:1366px;height:768px;overflow:hidden;display:flex;flex-direction:column;background:#fff;color:#1f2328;font:12px/18px "Open Sans","Noto Sans",sans-serif;white-space:nowrap}
svg{flex:none;display:block;fill:currentColor}
i,em{font-style:normal}
b{font-weight:500;font-family:"Noto Sans",sans-serif}
h1,h2,p,ul{margin:0;padding:0;font-weight:400}
.defs{position:absolute}
.med{font-family:"Noto Sans",sans-serif;font-weight:500;letter-spacing:-.12px}
.i14{width:14.4px;height:14.4px}
.i13{width:13px;height:13px}

/* browser tabs */
.tabstrip{position:relative;height:34px;flex:none;display:flex;padding-left:8px}
.desktop{position:absolute;left:0;top:0}
.tab{position:relative;display:flex;align-items:center;height:34px;border-radius:8px 8px 0 0;font-size:11.5px;color:#2b3d57}
.tab-active{width:240px;background:#cbdcf6;padding:0 12px}
.tab-idle{width:239px;background:#86ade9;padding:0 11px;border-radius:8px}
.ico-tab{width:16px;height:16px;color:#24292f}
.tab-title{width:176px;margin-left:8px;overflow:hidden;letter-spacing:-.05px;-webkit-mask-image:linear-gradient(90deg,#000 89%,transparent);mask-image:linear-gradient(90deg,#000 89%,transparent)}
.tab-idle .tab-title{width:178px;margin-left:7px;letter-spacing:0}
.close{width:9px;height:9px;margin-left:auto;stroke:#202124;stroke-width:1.8}
.round{position:relative;width:28px;height:28px;border-radius:50%;background:#86ade9;display:flex;align-items:center;justify-content:center;margin-top:3px}
.round svg{fill:none;stroke:#202124;stroke-width:2}
.new-tab{margin-left:8px}
.tab-menu{margin-left:700px}
.winctl{position:relative;display:flex;width:104px;height:19px;margin-left:9px;border:1px solid #9bb8d4;border-top:0;border-radius:0 0 5px 5px;box-shadow:0 0 0 1px #1d3f63;background:rgba(110,150,190,.25)}
.wc{width:28px;display:flex;justify-content:center;border-right:1px solid #9bb8d4}
.wc.wide{width:47px;border:0}

/* address bar */
.toolbar{height:37px;flex:none;background:#cbdcf6;border-bottom:1px solid #9aa9c4;display:flex;align-items:center;padding-left:14px}
.nav-ico{width:16px;height:16px;margin-right:16px;fill:none;stroke:#202124;stroke-width:2}
.nav-ico .solid{fill:#202124;stroke:none}
.nav-ico.dim{opacity:.42}
.omnibox{width:1118px;height:28px;margin-left:-2px;border-radius:14px;background:#f3f7fd;display:flex;align-items:center;padding:0 10px 0 13px}
.url{font-size:13.5px;letter-spacing:-.1px;margin-left:11px;flex:1;color:#62666b}
.url b{font:inherit;color:#202124}
.ob-ico{width:16px;height:16px;margin-left:16px;fill:none;stroke:#5f6368;stroke-width:1.4}
.ob-ico.thin{stroke-width:1.1}
.tb-ico{width:16px;height:16px;margin-left:14px;color:#202124}
.tb-ico + .tb-ico{margin-left:16px}
.profile{width:22px;height:22px;border-radius:50%;background:#7e57c2;color:#fff;font-size:11px;line-height:22px;text-align:center;margin-left:13px}

/* page */
.viewport{flex:1;display:flex;min-height:0}
.page{width:1349px;display:flex;flex-direction:column}
.scrollbar{width:17px;background:#f1f1f1;display:flex;flex-direction:column}
.thumb{width:13px;height:599px;margin-left:2px;background:#c1c1c1}
.down{margin-top:auto}
.gh-header{height:94px;flex:none;background:#f6f8fa;border-bottom:1px solid #d0d7de;padding:14px 14px 0}
.gh-top{display:flex;align-items:center;height:29px;color:#59636e}
.sq{width:29px;height:29px;flex:none;border:1px solid #d0d7de;border-radius:6px;display:flex;align-items:center;justify-content:center;margin-right:7px}
.gh-top .sq:first-child{margin-right:16px}
.logo{width:27px;height:27px;color:#1f2328}
.owner,.slash,.crumb{padding-top:2px}
.owner{width:80px;margin-left:15px;color:#1f2328}
.slash{margin:0 8px 0 7px;width:4px}
.crumb{color:#1f2328;width:136px}
.gsearch{width:234px;height:29px;margin-left:544px;border:1px solid #d0d7de;border-radius:6px;display:flex;align-items:center;padding:1px 0 0 6px}
.gsearch svg{margin:0 7.500px 1px 0}
.key{width:15px;height:14px;margin:1px 3px 0 2px;border:1px solid #59636e;border-radius:3px;font-size:10px;line-height:12px;text-align:center}
.vr{width:1px;height:18px;background:#d0d7de;margin:0 10px 0 11px}
.sq.plus{width:53px;gap:7px}
.avatar-lg{width:31px;height:31px}
.gh-nav{display:flex;height:50px}
.gh-nav a{display:flex;align-items:center;height:50px;padding:9px 0 0 7.200px;gap:7.500px}
.gh-nav svg{color:#59636e}
.gh-nav span{letter-spacing:-.08px}
.gh-nav a span.med{letter-spacing:.05px}
.gh-nav a.on{width:65px;margin:0 7px 0 1px;border-bottom:2px solid #fd8c73;padding:11px 0 0 7px;gap:7px}
.n-issues{width:78px}.n-pulls{width:116px}.n-actions{width:85px}.n-projects{width:89px}.n-wiki{width:68px}.n-security{width:89px}.n-insights{width:88px}

/* repository title */
.repo-head{margin:0 127px;height:56px;flex:none;width:1095px;border-bottom:1px solid #d0d7de;display:flex;align-items:flex-start;padding-top:14px}
.avatar-md{width:24px;height:24px;margin:2px 6px 0 -1px}
.repo-name{width:201px;font:500 17.5px/27px "Noto Sans",sans-serif;letter-spacing:-.36px}
.public{width:43px;height:19px;margin-top:4px;border:1px solid #d0d7de;border-radius:10px;font-size:10.5px;line-height:17px;text-align:center;color:#59636e}
.actions{margin-left:auto;display:flex;gap:7px}
.btn{height:26px;border:1px solid #d0d7de;border-radius:6px;background:#f6f8fa;display:flex;align-items:center;font:500 10.5px/16px "Noto Sans",sans-serif;letter-spacing:-.25px;color:#25292e}
.btn svg{color:#59636e}
.btn em{width:18px;height:18px;border-radius:9px;background:#e7eaed;text-align:center;line-height:18px;letter-spacing:0}
.pin{width:61px;padding-left:11px;gap:7px}
.watch{width:118px;padding-left:7px}
.watch span{width:43px;margin:0 7px 0 4px}
.watch svg:last-child{margin-left:5px}
.split svg{margin-right:7px}
.main-part{display:flex;align-items:center}
.drop{height:24px;border-left:1px solid #d0d7de;width:30px;display:flex;align-items:center;justify-content:center}
.drop svg{margin:0}
.fork{width:120px;padding-left:11px}
.fork .main-part{width:78px}
.fork em,.starb em{margin-left:5px}
.starb{width:121px;padding-left:11px}
.starb .main-part svg{margin-right:10px}
.starb .main-part{width:79px}

/* columns */
.layout{display:grid;grid-template-columns:807px 267px;column-gap:21px;margin-left:127px}
.filebar{display:flex;margin-top:22px;height:29px;color:#59636e}
.fbtn{height:29px;border:1px solid #d0d7de;border-radius:6px;background:#f6f8fa;display:flex;align-items:center}
.fbtn .med{color:#25292e;letter-spacing:0}
.b-main{width:95px;padding-left:11px}
.b-main .med{width:36px;margin-left:7px}
.stat{display:flex;align-items:center;gap:4px}
.stat b{color:#1f2328}
.s-branch{width:71px;margin-left:11.500px}
.s-tag{width:54px;margin-left:6.500px;gap:3.600px}
.goto{width:200px;margin-left:172px;border:1px solid #d0d7de;border-radius:6px;display:flex;align-items:center;padding:0 6px 0 11px}
.ph{margin-left:7px;flex:1}
kbd{width:14px;height:18px;border:1px solid #d6dbe0;border-radius:4px;background:#f6f8fa;font:10px/15px "DejaVu Sans Mono",monospace;text-align:center;color:#1f2328}
.b-add{width:86px;margin-left:7px;padding-left:10.500px}
.b-add .med{width:50px;margin-right:2px;letter-spacing:.12px}
.b-code{width:97px;margin-left:7px;padding-left:11px;background:#1f883d;border-color:#1a7f37;color:#fff;font-weight:600}
.b-code span{width:35px;margin:0 2.500px 0 7px;letter-spacing:.05px}
.files{margin-top:14px;border:1px solid #d0d7de;border-radius:6px;overflow:hidden;height:123px}
.latest{height:47px;background:#f6f8fa;display:flex;align-items:center;padding-left:11px;color:#59636e}
.avatar-sm{width:20px;height:20px}
.who{color:#1f2328;width:83px;margin:0 6.500px 0 6.700px;letter-spacing:.12px}
.mut{flex:1}
.sha{font-size:10.5px;width:99px;letter-spacing:-.05px;margin-right:14.500px}
.commits{font:500 10.5px/16px "Noto Sans",sans-serif;color:#1f2328;width:53px;margin:0 18.500px 0 4px;letter-spacing:-.13px}
.row{height:37px;border-top:1px solid #d0d7de;display:flex;align-items:center;padding:0 13.500px 0 15px;color:#59636e}
.fname{width:298px;margin-left:8.600px;color:#1f2328}
.long{letter-spacing:-.09px}
.msg{flex:1;letter-spacing:.03px}
.age{width:61px;letter-spacing:.07px}
.readme{margin-top:14px;height:164px;border:1px solid #d0d7de;border-radius:6px}
.rm-head{height:44px;border-bottom:1px solid #d0d7de;display:flex;padding-left:7px;align-items:stretch}
.rm-tabs{width:758px;border-bottom:1px solid #e6eaee;display:flex}
.rm-tab{width:87px;margin-bottom:-1px;border-bottom:1px solid #fd8c73;display:flex;align-items:center;gap:7px;padding:2px 0 0 8px}
.rm-tab svg,.pen{color:#59636e}
.rm-tab .med{letter-spacing:.25px;padding-top:2px}
.pen{margin:16px 0 0 6.500px}
.rm-body{display:flex;padding:28px 29px 0 7.500px}
.anchor{margin-top:12.500px}
h1{flex:1;margin-left:7px;height:47px;border-bottom:1px solid #dde2e7;font:500 28px/40px "Noto Sans",sans-serif;letter-spacing:-.62px}
aside{padding-top:22px;color:#59636e}
aside h2{font:500 13px/20px "Noto Sans",sans-serif;color:#1f2328;letter-spacing:.1px}
.about{display:flex;align-items:center;justify-content:space-between;height:29px}
.about h2{letter-spacing:.55px}
.about svg{margin-right:.8px}
.desc{font:italic 13px/20px "Open Sans",sans-serif;margin-top:12px;letter-spacing:.39px}
ul{list-style:none;margin-top:12px}
li{height:26px;display:flex;align-items:center;gap:11px}
.side{border-top:1px solid #dde2e7;height:98px;padding-top:16px;font-size:10.5px;line-height:16px;letter-spacing:-.14px}
ul + .side{margin-top:10px}
.side p{margin-top:15px}
.side a{color:#0969da;text-decoration:underline;text-underline-offset:3px}

footer{display:flex;align-items:center;height:22px;margin:44px 0 0 333px;font-size:10.5px;color:#59636e;letter-spacing:-.18px}
.flogo{width:21px;height:21px;margin-right:7.500px}
.f-copy{width:108px;letter-spacing:-.12px}.f-terms{width:42px}.f-priv{width:47.500px}.f-sec{width:52px}.f-stat{width:43.500px}.f-docs{width:38px}.f-cont{width:44px}.f-cook{width:92px;letter-spacing:-.08px}

/* taskbar */
.taskbar{height:40px;flex:none;display:flex;align-items:stretch;border-top:1px solid #173f5c;box-shadow:inset 0 1px #a3cbe0;background:linear-gradient(115deg,transparent 8%,rgba(110,205,215,.35) 14%,transparent 18%,transparent 42%,rgba(140,200,240,.2) 46%,transparent 50%),linear-gradient(90deg,#1b6aa8 0,#2d8fc6 10%,#45a5cf 28%,#3393cd 42%,#2674bd 52%,#2477c0 70%,#1d64b0 77%,#174a85 80%,#173f71 90%,#153862 100%)}
.start{width:58px;padding:0 0 0 7px}
.slot{position:relative;width:62px;display:flex;align-items:center;justify-content:center}
.slot.win{width:60px;margin:0 1px;border:1px solid #1c3c52;border-radius:3px;box-shadow:inset 0 0 0 1px rgba(255,255,255,.75);background:linear-gradient(150deg,rgba(225,243,250,.75),rgba(150,207,232,.55))}
.slot:nth-child(4){background:linear-gradient(150deg,#e3f2f8,#b3dcef)}
.slot code{position:absolute;left:16px;top:9px;color:#fff;font:bold 8px/9px "Liberation Mono",monospace}
.badge{position:absolute;left:30px;top:19px;width:16px;height:16px;border-radius:50%;background:#7a55b8;color:#fff;font-size:8px;line-height:16px;text-align:center}
.tray{display:flex;align-items:center;gap:8.200px;margin-left:402px}
.tray svg{width:16px;height:16px}
.clock{width:88px;display:flex;flex-direction:column;text-align:center;color:#fff;font-size:11.5px;line-height:17px;padding:3px 0 0 6px;letter-spacing:.18px}
.peek{width:14px;margin-left:auto;border:1px solid #0c2440;box-shadow:inset 1px 1px #7f9bb5;background:linear-gradient(160deg,#6f8ba6,#1c4169 50%)}
```
